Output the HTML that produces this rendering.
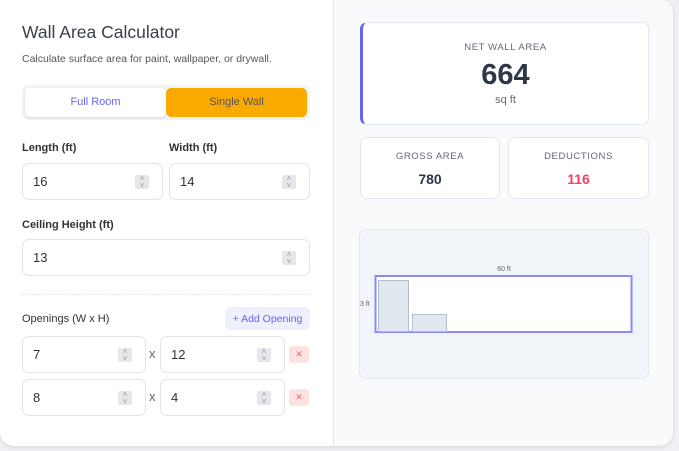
<!DOCTYPE html>
<html><head><style>
*{box-sizing:border-box;margin:0;padding:0}
body{width:679px;height:451px;background:#eef0f3;font-family:"Liberation Sans",sans-serif;position:relative;overflow:hidden}
.card{position:absolute;left:0;top:0;width:673px;height:446px;background:#f8fafc;border-radius:0 12px 14px 14px;box-shadow:0 1px 4px rgba(0,0,0,.12);overflow:hidden}
.left{position:absolute;left:0;top:0;width:334px;height:446px;background:#fff;border-right:1px solid #e5e8ee}
.a{position:absolute}
.inp{position:absolute;border:1px solid #dfe3ea;border-radius:7px;background:#fff;font-size:13px;color:#333;padding-left:10px;display:flex;align-items:center}
.spin{position:absolute;right:13px;top:50%;margin-top:-7px;width:14px;height:14px;background:#e6e7ea;border-radius:2px;font-size:8px;color:#999;text-align:center;line-height:7px}
.lbl{position:absolute;font-size:11px;font-weight:bold;color:#333}
.x{position:absolute;font-size:13px;color:#667}
.del{position:absolute;width:20px;height:17px;background:#fde2e2;border-radius:3px;color:#f06a6a;font-size:9px;text-align:center;line-height:17px}
.box{position:absolute;background:#fff;border:1px solid #e2e6ee;border-radius:7px;text-align:center}
.cap{font-size:9.5px;letter-spacing:.6px;color:#667}
</style></head><body>
<div class="card">
<div class="left">
<div class="a" style="left:22px;top:22px;font-size:17.5px;color:#3a3f47;font-weight:300">Wall Area Calculator</div>
<div class="a" style="left:22px;top:53px;font-size:10.5px;color:#555">Calculate surface area for paint, wallpaper, or drywall.</div>
<div class="a" style="left:22px;top:85px;width:288px;height:35px;background:#f1f3f7;border-radius:7px"></div>
<div class="a" style="left:25px;top:88px;width:141px;height:29px;background:#fff;border-radius:5px;box-shadow:0 1px 2px rgba(0,0,0,.12);font-size:11px;color:#6366f1;text-align:center;line-height:29px">Full Room</div>
<div class="a" style="left:166px;top:88px;width:141px;height:29px;background:#fbab00;border-radius:5px;font-size:11px;color:#555;text-align:center;line-height:29px">Single Wall</div>
<div class="lbl" style="left:22px;top:142px">Length (ft)</div>
<div class="lbl" style="left:169px;top:142px">Width (ft)</div>
<div class="inp" style="left:22px;top:163px;width:141px;height:37px">16<div class="spin">˄<br>˅</div></div>
<div class="inp" style="left:169px;top:163px;width:141px;height:37px">14<div class="spin">˄<br>˅</div></div>
<div class="lbl" style="left:22px;top:219px">Ceiling Height (ft)</div>
<div class="inp" style="left:22px;top:239px;width:288px;height:37px">13<div class="spin">˄<br>˅</div></div>
<div class="a" style="left:22px;top:294px;width:288px;border-top:1px dashed #e3e6eb"></div>
<div class="lbl" style="left:22px;top:313px;font-weight:normal;color:#333">Openings (W x H)</div>
<div class="a" style="left:225px;top:307px;width:85px;height:23px;background:#eef0fe;border-radius:5px;font-size:10.5px;color:#6366f1;text-align:center;line-height:25px">+ Add Opening</div>
<div class="inp" style="left:22px;top:336px;width:124px;height:37px">7<div class="spin">˄<br>˅</div></div>
<div class="x" style="left:149px;top:346px">x</div>
<div class="inp" style="left:160px;top:336px;width:125px;height:37px">12<div class="spin">˄<br>˅</div></div>
<div class="del" style="left:289px;top:346px">✕</div>
<div class="inp" style="left:22px;top:379px;width:124px;height:37px">8<div class="spin">˄<br>˅</div></div>
<div class="x" style="left:149px;top:389px">x</div>
<div class="inp" style="left:160px;top:379px;width:125px;height:37px">4<div class="spin">˄<br>˅</div></div>
<div class="del" style="left:289px;top:389px">✕</div>
</div>
<div class="box" style="left:360px;top:22px;width:289px;height:103px;border-left:3px solid #6366f1">
<div class="cap" style="margin-top:19px">NET WALL AREA</div>
<div style="font-size:29px;font-weight:bold;color:#2d3748;margin-top:6px">664</div>
<div style="font-size:11px;color:#667;margin-top:2px">sq ft</div>
</div>
<div class="box" style="left:360px;top:137px;width:140px;height:62px">
<div class="cap" style="margin-top:13px">GROSS AREA</div>
<div style="font-size:14px;font-weight:bold;color:#2d3748;margin-top:9px">780</div>
</div>
<div class="box" style="left:508px;top:137px;width:141px;height:62px">
<div class="cap" style="margin-top:13px">DEDUCTIONS</div>
<div style="font-size:14px;font-weight:bold;color:#ef4461;margin-top:9px">116</div>
</div>
<div class="a" style="left:359px;top:229px;width:290px;height:150px;background:#f1f4f8;border:1px solid #e2e6ee;border-radius:7px"></div>
<svg class="a" style="left:0;top:0" width="679" height="451">
<rect x="375.5" y="276" width="256" height="56" fill="#fff" stroke="#8b8bf7" stroke-width="2"/>
<rect x="378.5" y="280.5" width="30" height="51" fill="#e2e8f0" stroke="#b4bfcc"/>
<rect x="412.5" y="314.5" width="34" height="17" fill="#e2e8f0" stroke="#b4bfcc"/>
<text x="504" y="271" font-size="7" fill="#667" text-anchor="middle" font-family="Liberation Sans">60 ft</text>
<text x="360" y="306" font-size="7" fill="#667" font-family="Liberation Sans">3 ft</text>
</svg>
</div>
</body></html>
